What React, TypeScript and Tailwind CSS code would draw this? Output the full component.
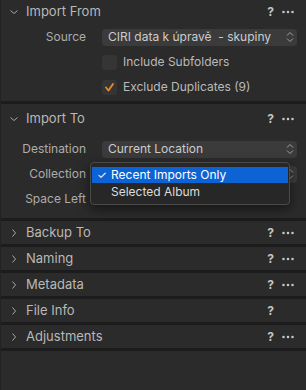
import React from 'react';

const font = { fontFamily: 'Inter, "Noto Sans", sans-serif' };

const ChevronDown = () => (
  <svg width="10" height="10" viewBox="0 0 10 10" className="text-[#a8a8a8]">
    <path d="M1.5 3.5 L5 6.5 L8.5 3.5" fill="none" stroke="currentColor" strokeWidth="1" />
  </svg>
);

const ChevronRight = () => (
  <svg width="10" height="10" viewBox="0 0 10 10" className="text-[#a8a8a8]">
    <path d="M3.5 1.5 L6.5 5 L3.5 8.5" fill="none" stroke="currentColor" strokeWidth="1" />
  </svg>
);

const Dots = () => (
  <svg width="12" height="4" viewBox="0 0 12 4" className="text-[#c4c4c4]">
    <circle cx="1.5" cy="2" r="1.3" fill="currentColor" />
    <circle cx="6" cy="2" r="1.3" fill="currentColor" />
    <circle cx="10.5" cy="2" r="1.3" fill="currentColor" />
  </svg>
);

const UpDown = () => (
  <svg width="8" height="12" viewBox="0 0 8 12" className="text-[#a0a0a0]">
    <path d="M1 4.5 L4 1.5 L7 4.5" fill="none" stroke="currentColor" strokeWidth="1" />
    <path d="M1 7.5 L4 10.5 L7 7.5" fill="none" stroke="currentColor" strokeWidth="1" />
  </svg>
);

const Header: React.FC<{ title: string; open?: boolean; dots?: boolean; tall?: boolean }> = ({ title, open, dots = true, tall }) => (
  <div className={`${tall ? 'h-6' : 'h-[23px]'} flex items-center pl-[8px] pr-[12px]`}>
    <div className="w-[17px] flex items-center">{open ? <ChevronDown /> : <ChevronRight />}</div>
    <span className="text-[13px] text-[#b9b9b9] flex-1">{title}</span>
    <span className="text-[12px] font-bold text-[#c4c4c4] mr-[8px]">?</span>
    {dots ? <Dots /> : <div className="w-[12px]" />}
  </div>
);

const Sep = () => <div className="h-[3px] bg-[#1c1c1c]" />;

const Row: React.FC<{ label: string; children?: React.ReactNode }> = ({ label, children }) => (
  <div className="flex items-center h-[18px]">
    <div className="w-[85px] text-right text-[12px] text-[#adadad]">{label}</div>
    <div className="flex-1 ml-[16px] mr-[9px]">{children}</div>
  </div>
);

const Select: React.FC<{ value: string }> = ({ value }) => (
  <div className="h-[17px] rounded-[4px] bg-[#3b3b3b] flex items-center pl-[6px] pr-[3px]">
    <span className="flex-1 text-[12px] text-[#cccccc] whitespace-pre">{value}</span>
    <UpDown />
  </div>
);

const Check: React.FC<{ checked?: boolean; label: string }> = ({ checked, label }) => (
  <div className="flex items-center h-[18px] pl-[101px]">
    <div className="w-[15px] h-[15px] rounded-[3px] bg-[#353535] flex items-center justify-center">
      {checked && (
        <svg width="11" height="11" viewBox="0 0 11 11">
          <path d="M2 5.5 L4.5 8.5 L9 2" fill="none" stroke="#f08a24" strokeWidth="1.8" strokeLinecap="round" strokeLinejoin="round" />
        </svg>
      )}
    </div>
    <span className="ml-[6px] text-[12px] text-[#bababa]">{label}</span>
  </div>
);

export default function App() {
  return (
    <div className="w-[306px] h-[390px] bg-[#2b2b2b] overflow-hidden relative border-l border-[#222]" style={font}>
      <Header title="Import From" open tall />
      <div className="pt-[4px] pb-[5px] flex flex-col gap-[7px]">
        <Row label="Source">
          <Select value="CIRI data k úpravě  - skupiny" />
        </Row>
        <Check label="Include Subfolders" />
        <Check checked label="Exclude Duplicates (9)" />
      </div>
      <Sep />
      <div className="pt-[3px]">
        <Header title="Import To" open tall />
      </div>
      <div className="pt-[9px] pb-[10px] flex flex-col gap-[7px]">
        <Row label="Destination">
          <Select value="Current Location" />
        </Row>
        <Row label="Collection">
          <Select value="" />
        </Row>
        <Row label="Space Left" />
      </div>
      <Sep />
      <Header title="Backup To" />
      <Sep />
      <Header title="Naming" />
      <Sep />
      <Header title="Metadata" />
      <Sep />
      <Header title="File Info" dots={false} />
      <Sep />
      <Header title="Adjustments" />
      <Sep />

      {/* Popup menu */}
      <div className="absolute left-[89px] top-[162px] w-[200px] rounded-[4px] bg-[#272727] border border-[#4a4a4a] shadow-[0_4px_12px_rgba(0,0,0,0.5)] py-[4px] px-[1px]">
        <div className="h-[16px] bg-[#0b63d4] flex items-center text-[12px] text-white">
          <span className="w-[19px] pl-[5px] text-[11px]">✓</span>
          <span>Recent Imports Only</span>
        </div>
        <div className="h-[17px] flex items-center text-[12px] text-[#dcdcdc]">
          <span className="w-[19px]" />
          <span>Selected Album</span>
        </div>
      </div>
    </div>
  );
}
